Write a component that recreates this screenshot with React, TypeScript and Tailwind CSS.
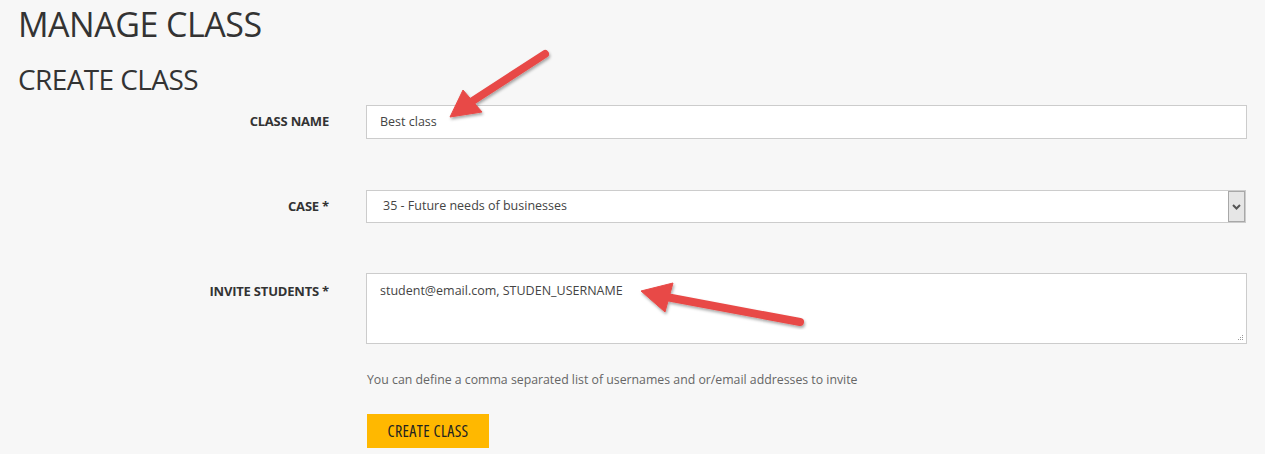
import React from 'react'

const font = { fontFamily: '"Open Sans", "Liberation Sans", sans-serif' }

function Label({ children }: { children: React.ReactNode }) {
  return (
    <div className="w-[366px] shrink-0 pr-[37px] text-right text-[13px] font-bold text-[#333] tracking-[-0.2px]">
      {children}
    </div>
  )
}

function Arrow({ tail, tip, w1, w2 }: { tail: [number, number]; tip: [number, number]; w1: [number, number]; w2: [number, number] }) {
  // shaft goes from tail to mid of the head base
  const bx = (w1[0] + w2[0]) / 2
  const by = (w1[1] + w2[1]) / 2
  return (
    <g filter="url(#sh)">
      <line x1={tail[0]} y1={tail[1]} x2={bx} y2={by} stroke="#e84a47" strokeWidth="8" strokeLinecap="round" />
      <polygon points={`${tip[0]},${tip[1]} ${w1[0]},${w1[1]} ${w2[0]},${w2[1]}`} fill="#e84a47" strokeLinejoin="round" stroke="#e84a47" strokeWidth="1" />
    </g>
  )
}

export default function App() {
  return (
    <div className="relative w-[1265px] h-[454px] overflow-hidden bg-[#f7f7f7] text-[#333]" style={font}>
      <div className="pl-[18px] pt-[2px]">
        <h1 className="text-[34px] leading-[44px] text-[#333] tracking-[-0.5px]">MANAGE CLASS</h1>
        <h2 className="mt-[16px] text-[28px] leading-[34px] text-[#333] tracking-[-0.6px]">CREATE CLASS</h2>
      </div>

      <div className="mt-[9px] flex flex-col">
        <div className="flex items-center h-[34px]">
          <Label>CLASS NAME</Label>
          <div className="w-[881px] h-[34px] border border-[#ccc] bg-white px-[13px] flex items-center text-[12.5px] text-[#444]">
            Best class
          </div>
        </div>

        <div className="mt-[51px] flex items-center h-[33px]">
          <Label>CASE *</Label>
          <div className="w-[880px] h-[33px] border border-[#ccc] bg-white flex items-center text-[12.5px] text-[#444]">
            <span className="flex-1 pl-[16px]">35 - Future needs of businesses</span>
            <div className="w-[17px] h-[31px] bg-[#e6e6e6] border border-[#a8a8a8] flex items-center justify-center">
              <svg width="9" height="6" viewBox="0 0 9 6">
                <path d="M1 1 L4.5 4.5 L8 1" stroke="#555" strokeWidth="2" fill="none" />
              </svg>
            </div>
          </div>
        </div>

        <div className="mt-[50px] flex items-start">
          <div className="pt-[9px]">
            <Label>INVITE STUDENTS *</Label>
          </div>
          <div className="relative w-[881px] h-[71px] border border-[#ccc] bg-white px-[13px] pt-[8px] text-[12.5px] text-[#444]">
            student@email.com, STUDEN_USERNAME
            <svg className="absolute right-[2px] bottom-[2px]" width="7" height="7" viewBox="0 0 7 7">
              <rect x="5" y="1" width="1" height="1" fill="#999" />
              <rect x="3" y="3" width="1" height="1" fill="#999" />
              <rect x="5" y="3" width="1" height="1" fill="#999" />
              <rect x="1" y="5" width="1" height="1" fill="#999" />
              <rect x="3" y="5" width="1" height="1" fill="#999" />
              <rect x="5" y="5" width="1" height="1" fill="#999" />
            </svg>
          </div>
        </div>

        <div className="ml-[367px] mt-[28px] text-[12.3px] leading-[16px] text-[#666]">
          You can define a comma separated list of usernames and or/email addresses to invite
        </div>

        <div className="ml-[367px] mt-[26px]">
          <button className="w-[122px] h-[34px] bg-[#ffb800] text-[16px] text-[#222] tracking-[0.4px] [font-stretch:condensed]">
            CREATE CLASS
          </button>
        </div>
      </div>

      <svg className="absolute inset-0 pointer-events-none" width="1265" height="454">
        <defs>
          <filter id="sh" x="-20%" y="-20%" width="140%" height="140%">
            <feDropShadow dx="1" dy="2" stdDeviation="1.5" floodColor="#000" floodOpacity="0.35" />
          </filter>
        </defs>
        <Arrow tail={[545, 54]} tip={[450, 117]} w1={[463, 90]} w2={[482, 112]} />
        <Arrow tail={[800, 322]} tip={[641, 291]} w1={[673, 283]} w2={[665, 312]} />
      </svg>
    </div>
  )
}
